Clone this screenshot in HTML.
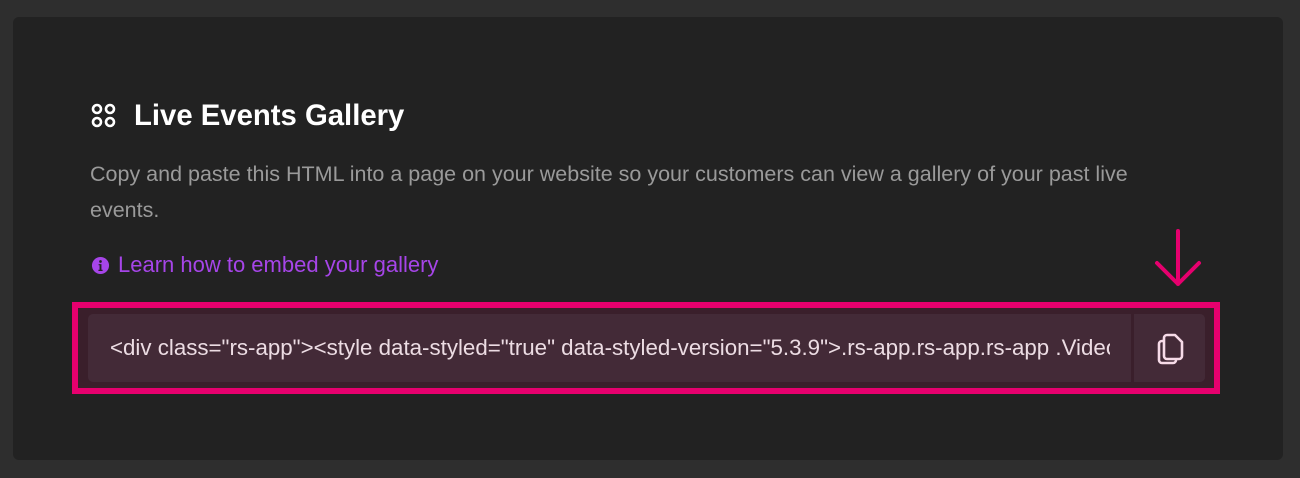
<!DOCTYPE html>
<html><head><meta charset="utf-8"><style>
html,body{margin:0;padding:0}
body{width:1300px;height:478px;background:#2e2e2e;font-family:"Liberation Sans",sans-serif;position:relative;overflow:hidden}
.card{position:absolute;left:13px;top:17px;width:1270px;height:443px;background:#222;border-radius:6px}
.title{position:absolute;left:91px;top:99px;color:#fff;font-weight:bold;font-size:29.3px;display:flex;align-items:center}
.title svg{margin-right:17px}
.desc{position:absolute;left:90px;top:156px;width:1090px;color:#9a9a9a;font-size:21.5px;line-height:36px}
.link{position:absolute;left:91px;top:252px;color:#a645e8;font-size:22px;display:flex;align-items:center}
.link svg{margin-right:8px}
.hl{position:absolute;left:72px;top:302px;width:1136px;height:80px;border:6px solid #e6006e;background:#3a1f2b}
.field{position:absolute;left:10px;top:6px;width:1117px;height:68px;background:#432a37;border-radius:5px;overflow:hidden}
.code{position:absolute;left:22px;top:0;width:1000px;line-height:68px;color:#ecdce3;font-size:22.3px;white-space:nowrap;overflow:hidden}
.div{position:absolute;left:1043px;top:0;width:3px;height:68px;background:#3a1f2b}
.btn{position:absolute;left:1046px;top:0;width:71px;height:68px;background:#432a37}
.arrow{position:absolute;left:1150px;top:228px}
</style></head><body>
<div class="card"></div>
<div class="title"><svg width="26" height="26" viewBox="0 0 26 26" fill="none" stroke="#fff" stroke-width="2.6"><circle cx="6" cy="6" r="4"/><circle cx="19" cy="6" r="4"/><circle cx="6" cy="19" r="4"/><circle cx="19" cy="19" r="4"/></svg>Live Events Gallery</div>
<div class="desc">Copy and paste this HTML into a page on your website so your customers can view a gallery of your past live<br>events.</div>
<div class="link"><svg width="19" height="19" viewBox="0 0 20 20"><circle cx="10" cy="10" r="9" fill="#a645e8"/><circle cx="10" cy="5.8" r="1.4" fill="#222"/><path d="M8 8.5h3v6h1.2v1.3H7.8v-1.3H9V9.8H8z" fill="#222"/></svg>Learn how to embed your gallery</div>
<div class="hl"><div class="field">
<div class="code">&lt;div class="rs-app"&gt;&lt;style data-styled="true" data-styled-version="5.3.9"&gt;.rs-app.rs-app.rs-app .VideoPlayer</div>
<div class="div"></div>
<div class="btn"><svg style="position:absolute;left:19px;top:18px" width="34" height="34" viewBox="0 0 34 34" fill="none" stroke="#f7dbe8" stroke-width="2.6" stroke-linejoin="round"><path d="M14 3h8l7 7v14a3 3 0 0 1-3 3h-12a3 3 0 0 1-3-3V6a3 3 0 0 1 3-3z"/><path d="M11 9H9a3 3 0 0 0-3 3v16a3 3 0 0 0 3 3h11a3 3 0 0 0 3-3v-1"/></svg></div>
</div></div>
<svg class="arrow" width="56" height="62" viewBox="0 0 56 62" fill="none" stroke="#e6006e" stroke-width="4" stroke-linecap="round" stroke-linejoin="round"><path d="M28 3v53M7 35l21 21 21-21"/></svg>
</body></html>
